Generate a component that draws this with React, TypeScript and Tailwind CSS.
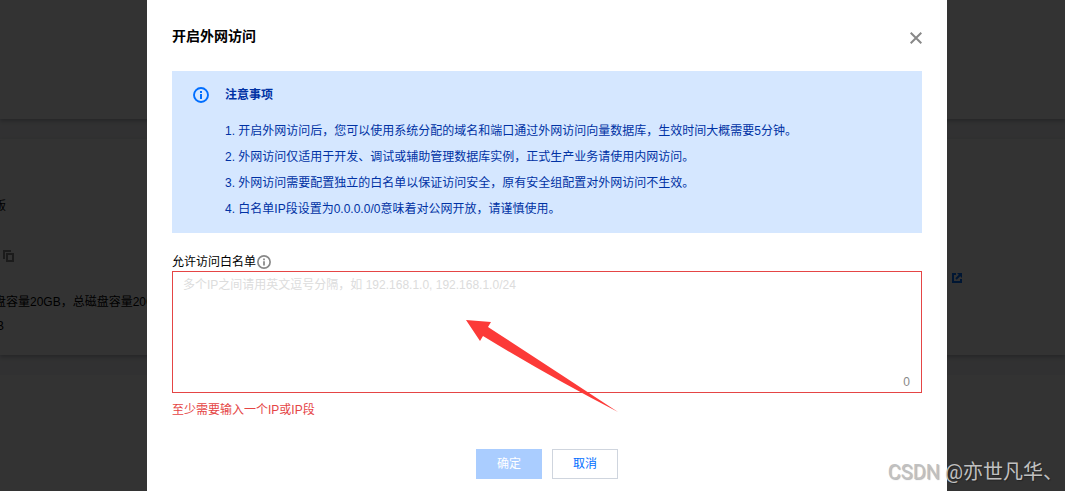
import { useState } from "react";

const notices = [
  "1. 开启外网访问后，您可以使用系统分配的域名和端口通过外网访问向量数据库，生效时间大概需要5分钟。",
  "2. 外网访问仅适用于开发、调试或辅助管理数据库实例，正式生产业务请使用内网访问。",
  "3. 外网访问需要配置独立的白名单以保证访问安全，原有安全组配置对外网访问不生效。",
  "4. 白名单IP段设置为0.0.0.0/0意味着对公网开放，请谨慎使用。",
];

function InfoIcon({ className }: { className: string }) {
  return (
    <svg className={className} viewBox="0 0 16 16" fill="none" aria-hidden="true">
      <circle cx="8" cy="8" r="7" stroke="currentColor" strokeWidth="1.9" />
      <path d="M7 4h2v2H7zM7 7h2v5H7z" fill="currentColor" />
    </svg>
  );
}

// Instance detail page that stays behind the dialog
function InstancePage() {
  return (
    <div className="flex h-screen flex-col gap-5 overflow-hidden bg-[#f3f4f7] text-xs text-black">
      <div className="h-[119px] shrink-0 bg-white shadow-[0_2px_4px_rgba(54,58,80,0.32)]" />
      <div className="flex shrink-0 justify-between bg-white pt-[57px] pb-[19px] shadow-[0_2px_4px_rgba(54,58,80,0.32)]">
        <div className="-ml-[6px] whitespace-nowrap leading-5">
          <p>版</p>
          <button type="button" aria-label="复制" className="mt-[30px] ml-2 block h-5 text-[#888]">
            <svg className="h-3 w-3" viewBox="0 0 12 12" fill="none" stroke="currentColor" strokeWidth="2">
              <path d="M2 9V1h7" />
              <path d="M5 4h6v7H5z" />
            </svg>
          </button>
          <p className="mt-[26px]">盘容量20GB，总磁盘容量20GB</p>
          <p className="mt-1 ml-[2px]">B</p>
        </div>
        <div className="w-[113px] pt-[77px]">
          <a href="#" aria-label="查看详情" className="block w-3 text-[#006eff]">
            <svg className="h-[10px] w-[10px]" viewBox="0 0 10 10" fill="none" stroke="currentColor" strokeWidth="2">
              <path d="M4 1H1v8h8V6" />
              <path d="M4 6l4-4" />
              <path d="M5 0h5v5z" fill="currentColor" stroke="none" />
            </svg>
          </a>
        </div>
      </div>
      <div className="grow bg-white" />
    </div>
  );
}

export default function App() {
  const [whitelist, setWhitelist] = useState("");

  return (
    <div className="relative font-['Liberation_Sans','Noto_Sans_CJK_SC',sans-serif]">
      <InstancePage />

      <div className="absolute inset-0 flex justify-center bg-black/80 pl-[29px]">
        <div
          role="dialog"
          aria-labelledby="dialog-title"
          className="w-full max-w-[800px] bg-white px-[25px] pt-[26px] text-xs text-black"
        >
          <div className="flex h-[45px] items-start justify-between">
            <h2 id="dialog-title" className="text-sm leading-5 font-bold">
              开启外网访问
            </h2>
            <button type="button" aria-label="关闭" className="pt-[6px] text-[#888]">
              <svg className="h-3 w-3" viewBox="0 0 12 12" fill="none" stroke="currentColor" strokeWidth="2">
                <path d="M.7.7l10.6 10.6M11.3.7L.7 11.3" />
              </svg>
            </button>
          </div>

          {/* Notices */}
          <div className="flex gap-4 bg-[#d5e7ff] px-[21px] pt-[14px] pb-[11px] text-[#0032a4]">
            <InfoIcon className="mt-[2px] h-4 w-4 shrink-0 text-[#006eff]" />
            <div>
              <h3 className="mb-[13px] leading-5 font-bold">注意事项</h3>
              <ul className="leading-[26px]">
                {notices.map((notice) => (
                  <li key={notice}>{notice}</li>
                ))}
              </ul>
            </div>
          </div>

          {/* Whitelist */}
          <div className="mt-5 flex items-center gap-px leading-[18px]">
            <label htmlFor="whitelist">允许访问白名单</label>
            <InfoIcon className="h-[14px] w-[14px] text-[#888]" />
          </div>
          <div className="relative">
            <textarea
              id="whitelist"
              value={whitelist}
              onChange={(e) => setWhitelist(e.target.value)}
              placeholder="多个IP之间请用英文逗号分隔，如 192.168.1.0, 192.168.1.0/24"
              className="block h-[122px] w-full resize-none border border-[#e54545] px-[10px] py-1 leading-[18px] outline-none placeholder:text-[#dcdcdc]"
            />
            <span className="absolute right-3 bottom-[2px] leading-[18px] text-[#888]">{whitelist.length}</span>
            <svg
              className="pointer-events-none absolute top-[49px] left-[294px] h-[93px] w-[153px]"
              viewBox="0 0 153 93"
              fill="#fc3a38"
              aria-hidden="true"
            >
              <path d="M0 0l25 2-3 5Q88 50 152 92Q84 57 17 16l-3 5z" />
            </svg>
          </div>
          <p className="mt-2 leading-[18px] text-[#e54545]">至少需要输入一个IP或IP段</p>

          <div className="mt-[30px] flex justify-center gap-[10px]">
            <button type="button" disabled className="h-[30px] w-[66px] bg-[#aacdff] text-white">
              确定
            </button>
            <button type="button" className="h-[30px] w-[66px] border border-[#cfd5de] text-[#006eff]">
              取消
            </button>
          </div>
        </div>
      </div>

      <span className="absolute right-[2px] bottom-[5px] font-['Roboto','Noto_Sans_CJK_SC',sans-serif] text-xl leading-7 whitespace-nowrap text-[#c0c0c0] [text-shadow:1px_1px_1px_rgba(0,0,0,0.3)]">
        CSDN @亦世凡华、
      </span>
    </div>
  );
}
